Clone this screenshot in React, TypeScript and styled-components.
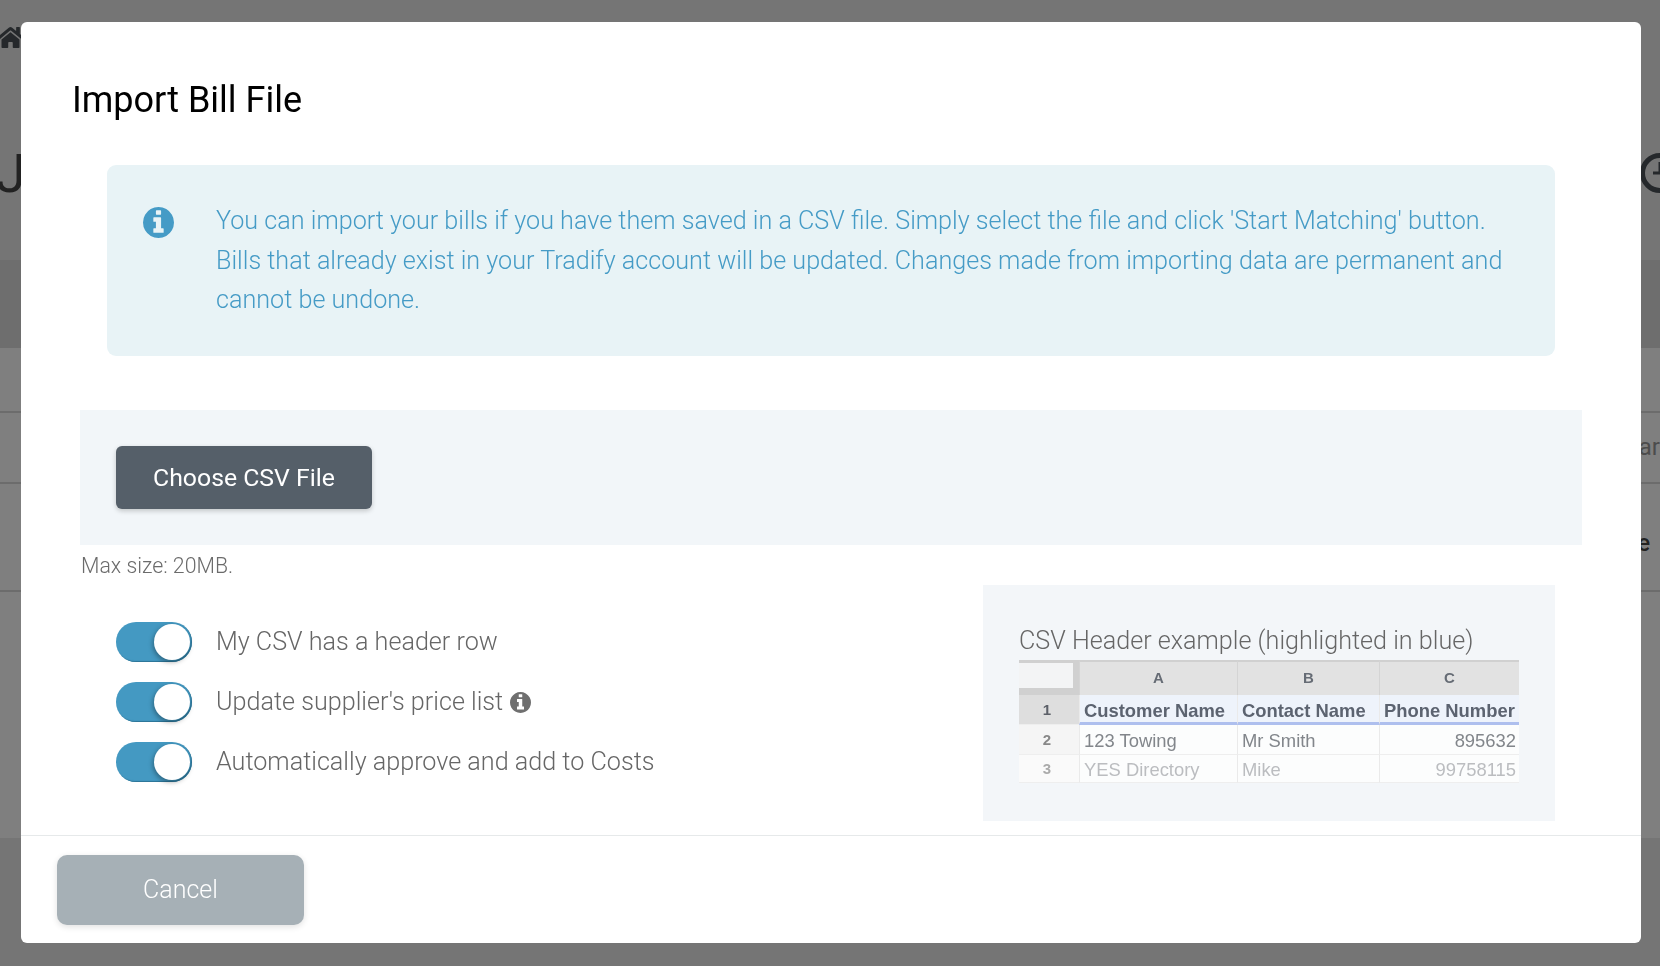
import React from 'react';
import styled, { createGlobalStyle } from 'styled-components';
import { FaHome } from 'react-icons/fa';

const GlobalStyle = createGlobalStyle`
  html, body {
    margin: 0;
    padding: 0;
    height: 100%;
    background: #fff;
    font-family: Roboto, "Liberation Sans", sans-serif;
  }
  * {
    box-sizing: border-box;
  }
`;

/* page behind the dialog */
const Page = styled.div`
  height: 100vh;
  overflow: hidden;
  display: flex;
  flex-direction: column;
  background: #ebebeb;
  color: #444;
`;

const TopSection = styled.div`
  height: 260px;
  padding-top: 24px;
`;

const HomeLink = styled.div`
  height: 24px;
  margin-left: -3px;
  font-size: 27px;
  color: #4a5157;
  svg {
    display: block;
  }
`;

const TitleRow = styled.div`
  margin-top: 95px;
  height: 60px;
  display: flex;
  justify-content: space-between;
  align-items: center;
`;

const PageTitle = styled.h1`
  margin: 0 0 0 -4px;
  font-size: 54px;
  font-weight: 400;
  color: #444;
`;

const ClockIcon = styled.svg`
  width: 40px;
  height: 40px;
  margin-right: -20px;
  flex: none;
`;

const Band = styled.div`
  height: 88px;
  background: #dcdcdc;
`;

const PageBody = styled.div`
  height: 490px;
  padding-top: 63px;
  background: #fff;
`;

const PageRow = styled.div<{ $height: number; $bold?: boolean }>`
  height: ${(p) => p.$height}px;
  border-top: 2px solid #d8d8d8;
  padding: ${(p) => (p.$bold ? '45px 10px 0 0' : '20px 0 0 0')};
  text-align: right;
  white-space: nowrap;
  font-size: 24px;
  font-weight: ${(p) => (p.$bold ? 500 : 400)};
  color: ${(p) => (p.$bold ? '#444' : '#999')};
`;

const PageFooter = styled.div`
  flex: 1;
  background: #ebebeb;
`;

/* dialog */
const Overlay = styled.div`
  position: fixed;
  inset: 0;
  padding: 22px 19px 23px 21px;
  background: rgba(0, 0, 0, 0.5);
`;

const Modal = styled.div`
  height: 100%;
  display: flex;
  flex-direction: column;
  background: #fff;
  border-radius: 6px;
  overflow: hidden;
`;

const ModalBody = styled.div`
  flex: 1;
  padding-top: 51px;
`;

const Title = styled.h2`
  margin: 0 0 0 51px;
  height: 54px;
  font-size: 36px;
  line-height: 54px;
  font-weight: 400;
  color: #000;
`;

const InfoBox = styled.div`
  margin: 38px 86px 0;
  padding: 36px 40px 36px 36px;
  display: flex;
  gap: 41px;
  background: #e8f3f6;
  border-radius: 9px;
  color: #459bc6;
`;

const InfoGlyph = styled.svg<{ $size: number }>`
  flex: none;
  width: ${(p) => p.$size}px;
  height: ${(p) => p.$size}px;
  fill: currentColor;
`;

const InfoIcon = styled.div`
  flex: none;
  width: 32px;
  height: 32px;
  margin-top: 6px;
  color: #459bc6;
`;

const InfoText = styled.p`
  margin: 0;
  font-size: 25.17px;
  line-height: 39.5px;
  font-weight: 300;
`;

const UploadPanel = styled.div`
  margin: 54px 59px 0;
  height: 135px;
  padding: 36px;
  background: #f2f6f9;
`;

const ChooseButton = styled.button`
  display: block;
  width: 256px;
  height: 63px;
  padding: 0;
  border: none;
  border-radius: 6px;
  background: #555f69;
  color: #fff;
  font-family: inherit;
  font-size: 24.8px;
  font-weight: 400;
  box-shadow: 0 2px 5px rgba(0, 0, 0, 0.2);
`;

const MaxSize = styled.div`
  margin: 8px 0 0 60px;
  height: 26px;
  font-size: 21.3px;
  line-height: 26px;
  font-weight: 300;
  color: #6b6b6b;
`;

const OptionsRow = styled.div`
  margin: 6px 86px 0 59px;
  display: flex;
  justify-content: space-between;
  align-items: flex-start;
`;

const Toggles = styled.div`
  padding: 37px 0 0 36px;
  display: flex;
  flex-direction: column;
  gap: 20px;
`;

const ToggleRow = styled.div`
  display: flex;
  align-items: center;
  gap: 24px;
  height: 40px;
  font-size: 25.17px;
  font-weight: 300;
  color: #666;
`;

const Track = styled.div`
  width: 76px;
  height: 40px;
  padding: 2px 2px 2px 0;
  display: flex;
  justify-content: flex-end;
  flex: none;
  border-radius: 20px;
  background: #4499c2;
  box-shadow: inset -1px -1px 1px #2c7496;
`;

const Knob = styled.div`
  width: 36px;
  height: 36px;
  border-radius: 50%;
  background: #fff;
  box-shadow: -1px 2px 5px rgba(0, 0, 0, 0.35);
`;

const HelpIcon = styled.span`
  display: inline-flex;
  margin-left: 7px;
  vertical-align: -3px;
  color: #6f6f6f;
`;

const ExamplePanel = styled.div`
  width: 572px;
  height: 236px;
  padding: 40px 36px 0 36px;
  background: #f3f6f9;
`;

const ExampleCaption = styled.div`
  height: 35px;
  font-size: 25.17px;
  line-height: 32px;
  font-weight: 300;
  color: #666;
  white-space: nowrap;
`;

const Sheet = styled.div`
  width: 500px;
  display: grid;
  grid-template-columns: 60px 158px 142px 140px;
  grid-template-rows: 35px 30px 30px 28px;
  font-family: "Liberation Sans", Arial, sans-serif;
  filter: blur(0.6px);
`;

const Corner = styled.div`
  background: #d0d0d0;
  padding: 3px 6px 7px 0;
  &::after {
    content: '';
    display: block;
    height: 100%;
    background: #f3f4f5;
  }
`;

const ColHead = styled.div`
  background: #e2e2e2;
  border-left: 1px solid #d4d4d4;
  border-top: 2px solid #d0d0d0;
  padding-bottom: 2px;
  display: flex;
  align-items: center;
  justify-content: center;
  font-size: 15px;
  font-weight: 700;
  color: #666c75;
`;

const RowHead = styled.div<{ $row: number }>`
  display: flex;
  align-items: center;
  justify-content: center;
  padding-right: 4px;
  font-size: 15px;
  font-weight: 700;
  background: ${(p) => (p.$row === 1 ? '#dedede' : p.$row === 2 ? '#f5f5f5' : '#fafafa')};
  color: ${(p) => (p.$row === 1 ? '#5c6068' : p.$row === 2 ? '#888' : '#aaa')};
  border-bottom: 1px solid #eee;
`;

const Cell = styled.div<{ $row: number; $right?: boolean }>`
  display: flex;
  align-items: center;
  justify-content: ${(p) => (p.$right ? 'flex-end' : 'flex-start')};
  padding: ${(p) => (p.$row === 1 ? '6px' : '4px')} 3px 0 4px;
  border-left: 1px solid #eaeaea;
  white-space: nowrap;
  font-size: 18.4px;
  font-weight: ${(p) => (p.$row === 1 ? 700 : 400)};
  background: ${(p) => (p.$row === 1 ? '#eef3fb' : '#fcfdfd')};
  color: ${(p) => (p.$row === 1 ? '#5c6370' : p.$row === 2 ? '#82868b' : '#bbbdc0')};
  border-bottom: ${(p) => (p.$row === 1 ? '3px solid #aebfee' : '1px solid #eeeeee')};
`;

const ModalFooter = styled.div`
  height: 108px;
  flex: none;
  padding: 19px 36px 0;
  border-top: 1px solid #e6e9ea;
`;

const CancelButton = styled.button`
  display: block;
  width: 247px;
  height: 70px;
  padding: 0 0 2px;
  border: none;
  border-radius: 10px;
  background: #a6b0b6;
  color: #fff;
  font-family: inherit;
  font-size: 25px;
  font-weight: 300;
  box-shadow: 0 2px 6px rgba(0, 0, 0, 0.12);
`;

const sheetRows = [
  { row: 1, cells: ['Customer Name', 'Contact Name', 'Phone Number'] },
  { row: 2, cells: ['123 Towing', 'Mr Smith', '895632'] },
  { row: 3, cells: ['YES Directory', 'Mike', '99758115'] },
];

const CircleInfo: React.FC<{ size: number }> = ({ size }) => (
  <InfoGlyph $size={size} viewBox="128 128 1536 1536">
    <path
      fillRule="evenodd"
      d="M1152 1376v-160q0-14-9-23t-23-9h-96v-512q0-14-9-23t-23-9h-320q-14 0-23 9t-9 23v160q0 14 9 23t23 9h96v320h-96q-14 0-23 9t-9 23v160q0 14 9 23t23 9h448q14 0 23-9t9-23zm-128-896v-160q0-14-9-23t-23-9h-192q-14 0-23 9t-9 23v160q0 14 9 23t23 9h192q14 0 23-9t9-23zm640 416q0 209-103 385.5t-279.5 279.5-385.5 103-385.5-103-279.5-279.5-103-385.5 103-385.5 279.5-279.5 385.5-103 385.5 103 279.5 279.5 103 385.5z"
    />
  </InfoGlyph>
);

const Toggle: React.FC = () => (
  <Track>
    <Knob />
  </Track>
);

const App: React.FC = () => {
  return (
    <>
      <GlobalStyle />
      <Page>
        <TopSection>
          <HomeLink>
            <FaHome />
          </HomeLink>
          <TitleRow>
            <PageTitle>J</PageTitle>
            <ClockIcon viewBox="0 0 40 40" fill="none" stroke="#4a5157" strokeWidth="5">
              <circle cx="20" cy="20" r="17.5" />
              <path d="M20 9 V20 H13" strokeWidth="3" />
            </ClockIcon>
          </TitleRow>
        </TopSection>
        <Band />
        <PageBody>
          <PageRow $height={71}>ar</PageRow>
          <PageRow $height={108} $bold>
            e
          </PageRow>
          <PageRow $height={60} />
        </PageBody>
        <PageFooter />
      </Page>
      <Overlay>
        <Modal>
          <ModalBody>
            <Title>Import Bill File</Title>
            <InfoBox>
              <InfoIcon>
                <CircleInfo size={31} />
              </InfoIcon>
              <InfoText>
                You can import your bills if you have them saved in a CSV file. Simply select the file and click
                'Start Matching' button. Bills that already exist in your Tradify account will be updated. Changes
                made from importing data are permanent and cannot be undone.
              </InfoText>
            </InfoBox>
            <UploadPanel>
              <ChooseButton>Choose CSV File</ChooseButton>
            </UploadPanel>
            <MaxSize>Max size: 20MB.</MaxSize>
            <OptionsRow>
              <Toggles>
                <ToggleRow>
                  <Toggle />
                  <span>My CSV has a header row</span>
                </ToggleRow>
                <ToggleRow>
                  <Toggle />
                  <span>
                    Update supplier's price list
                    <HelpIcon>
                      <CircleInfo size={21} />
                    </HelpIcon>
                  </span>
                </ToggleRow>
                <ToggleRow>
                  <Toggle />
                  <span>Automatically approve and add to Costs</span>
                </ToggleRow>
              </Toggles>
              <ExamplePanel>
                <ExampleCaption>CSV Header example (highlighted in blue)</ExampleCaption>
                <Sheet>
                  <Corner />
                  <ColHead>A</ColHead>
                  <ColHead>B</ColHead>
                  <ColHead>C</ColHead>
                  {sheetRows.map(({ row, cells }) => (
                    <React.Fragment key={row}>
                      <RowHead $row={row}>{row}</RowHead>
                      {cells.map((text, i) => (
                        <Cell key={text} $row={row} $right={row > 1 && i === 2}>
                          {text}
                        </Cell>
                      ))}
                    </React.Fragment>
                  ))}
                </Sheet>
              </ExamplePanel>
            </OptionsRow>
          </ModalBody>
          <ModalFooter>
            <CancelButton>Cancel</CancelButton>
          </ModalFooter>
        </Modal>
      </Overlay>
    </>
  );
};

export default App;
